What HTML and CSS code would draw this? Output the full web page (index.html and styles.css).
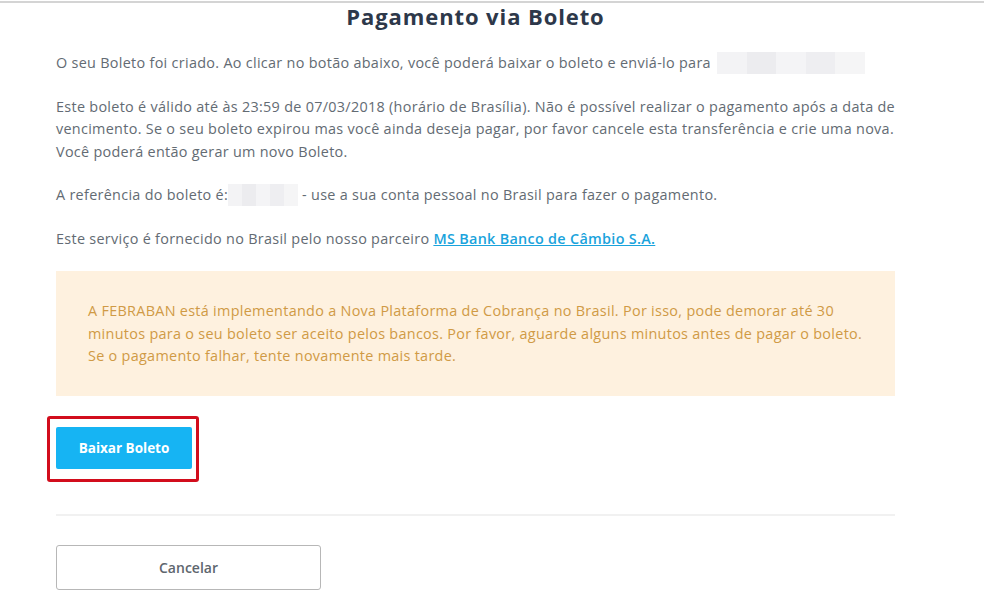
FILE: index.html
```html
<!DOCTYPE html>
<html lang="pt-BR">
<head>
<meta charset="utf-8">
<title>Pagamento via Boleto</title>
<link rel="stylesheet" href="styles.css">
</head>
<body>
<div class="topline"></div>
<main class="page">
  <h1 class="title">Pagamento via Boleto</h1>
  <p class="text">O seu Boleto foi criado. Ao clicar no botão abaixo, você poderá baixar o boleto e enviá-lo para <span class="blur blur-email"></span></p>
  <p class="text">Este boleto é válido até às 23:59 de 07/03/2018 (horário de Brasília). Não é possível realizar o pagamento após a data de vencimento. Se o seu boleto expirou mas você ainda deseja pagar, por favor cancele esta transferência e crie uma nova. Você poderá então gerar um novo Boleto.</p>
  <p class="text">A referência do boleto é:<span class="blur blur-ref"></span> - use a sua conta pessoal no Brasil para fazer o pagamento.</p>
  <p class="text">Este serviço é fornecido no Brasil pelo nosso parceiro <a class="link" href="#">MS Bank Banco de Câmbio S.A.</a></p>
  <div class="notice">A FEBRABAN está implementando a Nova Plataforma de Cobrança no Brasil. Por isso, pode demorar até 30 minutos para o seu boleto ser aceito pelos bancos. Por favor, aguarde alguns minutos antes de pagar o boleto. Se o pagamento falhar, tente novamente mais tarde.</div>
  <div class="highlight">
    <button class="btn-primary" type="button">Baixar Boleto</button>
  </div>
  <hr class="divider">
  <button class="btn-secondary" type="button">Cancelar</button>
</main>
</body>
</html>
```
FILE: styles.css
```css
html, body {
  margin: 0;
  padding: 0;
  background: #ffffff;
}
body {
  font-family: "Open Sans", "Liberation Sans", sans-serif;
  color: #636b73;
}
.topline {
  margin-top: 1px;
  height: 2px;
  background: #d4d4d4;
}
.page {
  width: 839px;
  margin-left: 56px;
}
.title {
  margin: -2px 0 0 0;
  text-align: center;
  font-size: 22px;
  line-height: 30px;
  letter-spacing: 0.9px;
  font-weight: 700;
  color: #2d384a;
}
.text {
  margin: 0 0 21px 0;
  font-size: 14.4px;
  line-height: 22.5px;
  letter-spacing: 0.3px;
}
.title + .text {
  margin-top: 21px;
}
.blur {
  display: inline-block;
  vertical-align: top;
  height: 22px;
  background:
    linear-gradient(90deg, #f3f3f5 0 20%, #ececef 20% 40%, #f4f4f6 40% 60%, #eeeef1 60% 80%, #f5f5f6 80% 100%);
}
.blur-email {
  width: 148px;
  margin-left: 2px;
}
.blur-ref {
  width: 70px;
}
.link {
  color: #1aa3dc;
  font-weight: 600;
  text-decoration: underline;
}
.notice {
  margin-top: 21px;
  background: #fef1df;
  color: #d09a45;
  font-size: 14.4px;
  line-height: 22.5px;
  letter-spacing: 0.3px;
  padding: 29px 32px 28px 32px;
}
.highlight {
  display: inline-block;
  margin: 20px 0 0 -9px;
  border: 3px solid #d20d1c;
  border-radius: 3px;
  padding: 8px 4px 10px 6px;
}
.btn-primary {
  display: block;
  width: 136px;
  height: 42px;
  border: 0;
  border-radius: 2px;
  background: #16b4f3;
  color: #ffffff;
  font-family: "Open Sans", "Liberation Sans", sans-serif;
  font-size: 13.5px;
  font-weight: 700;
  cursor: pointer;
}
.divider {
  margin: 32px 0 0 0;
  border: 0;
  height: 2px;
  background: #f1f1f1;
}
.btn-secondary {
  display: block;
  margin-top: 29px;
  width: 265px;
  height: 45px;
  border: 1px solid #b7b7b7;
  border-radius: 3px;
  background: #ffffff;
  color: #5e666e;
  font-family: "Open Sans", "Liberation Sans", sans-serif;
  font-size: 14px;
  font-weight: 600;
  cursor: pointer;
}
```
